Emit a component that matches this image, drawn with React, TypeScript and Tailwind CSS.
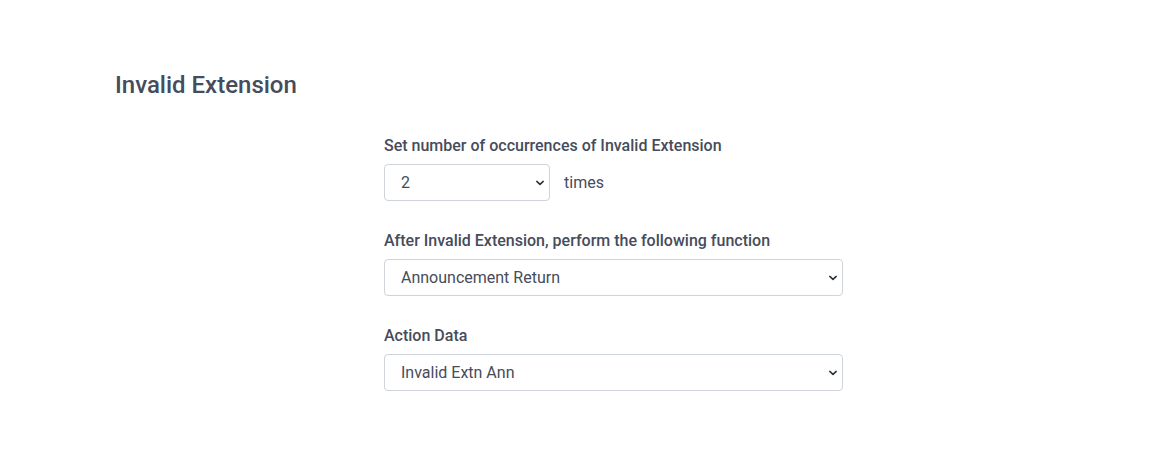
import React from "react";

function Chevron() {
  return (
    <svg width="10" height="6" viewBox="0 0 10 6" className="pointer-events-none absolute right-[5px] top-1/2 -translate-y-1/2">
      <path d="M1.8 1.4l3.2 3 3.2-3" fill="none" stroke="#2b2f36" strokeWidth="1.5" strokeLinecap="round" strokeLinejoin="round" />
    </svg>
  );
}

function Select({ value, options, className }: { value: string; options: string[]; className: string }) {
  return (
    <div className={"relative " + className}>
      <select
        defaultValue={value}
        className="block h-[37px] w-full appearance-none rounded-[4px] border border-[#ced4da] bg-white pl-[16px] pr-8 text-[16px] text-[#464c5b] outline-none"
      >
        {options.map((o) => (
          <option key={o}>{o}</option>
        ))}
      </select>
      <Chevron />
    </div>
  );
}

export default function App() {
  return (
    <div className="min-h-[469px] w-full bg-white font-['Roboto',sans-serif] text-[#464c5b]">
      <div className="pl-[115px] pt-[69px]">
        <h2 className="text-[24px] font-medium leading-[32px]">Invalid Extension</h2>
      </div>
      <div className="ml-[384px] mt-[33px] w-[459px]">
        <label className="block text-[16px] font-medium leading-[24px]">Set number of occurrences of Invalid Extension</label>
        <div className="mt-[6px] flex items-center gap-[14px]">
          <Select value="2" options={["1", "2", "3", "4", "5"]} className="w-[166px]" />
          <span className="text-[16px]">times</span>
        </div>
        <label className="mt-[28px] block text-[16px] font-medium leading-[24px]">After Invalid Extension, perform the following function</label>
        <Select value="Announcement Return" options={["Announcement Return", "Disconnect", "Transfer"]} className="mt-[6px] w-full" />
        <label className="mt-[28px] block text-[16px] font-medium leading-[24px]">Action Data</label>
        <Select value="Invalid Extn Ann" options={["Invalid Extn Ann", "Default"]} className="mt-[6px] w-full" />
      </div>
    </div>
  );
}
